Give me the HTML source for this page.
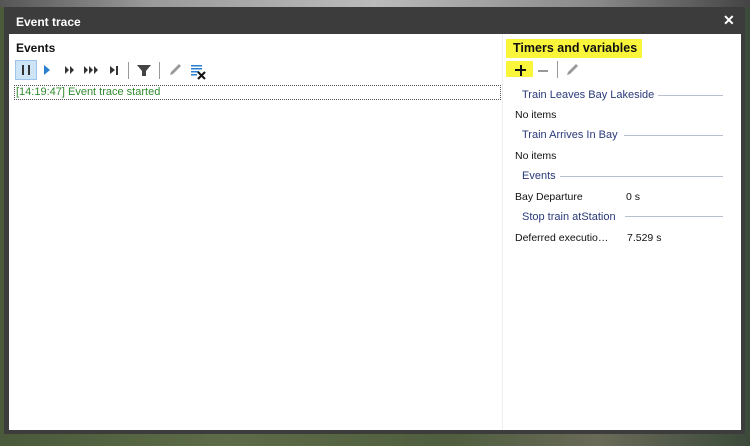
<!DOCTYPE html>
<html><head><meta charset="utf-8"><style>
*{margin:0;padding:0;box-sizing:border-box}
body{width:750px;height:446px;overflow:hidden;position:relative;font-family:"Liberation Sans",sans-serif;
background:linear-gradient(90deg,#4a5a3a 0%,#5d6b48 30%,#4f5e3e 60%,#6a6a58 80%,#3b4a3a 100%)}
.top{position:absolute;left:0;top:0;width:750px;height:7px;background:linear-gradient(90deg,#555 0%,#9a9a9a 20%,#bbb 50%,#888 80%,#444 100%)}
.frame{position:absolute;left:4px;top:7px;width:741px;height:427px;background:#3c3c3c}
.title{position:absolute;left:16px;top:15px;color:#fff;font-weight:bold;font-size:12px}
.close{position:absolute;left:723px;top:12px;color:#fff;font-size:14px;font-weight:bold}
.content{position:absolute;left:9px;top:34px;width:732px;height:396px;background:#fff}
.div{position:absolute;left:502px;top:34px;width:1px;height:396px;background:#eee}
.h{position:absolute;font-weight:bold;font-size:12px;color:#111}
.t{position:absolute;font-size:10.5px;color:#111;white-space:nowrap}
.sec{position:absolute;font-size:11px;color:#2a3a7a;white-space:nowrap}
.line{position:absolute;height:1px;background:#b8c0d0}
</style></head><body>
<div class="top"></div>
<div class="frame"></div>
<div class="title">Event trace</div>
<div class="close">✕</div>
<div class="content"></div>
<div class="div"></div>
<div class="h" style="left:16px;top:41px">Events</div>
<div style="position:absolute;left:15px;top:60px;width:22px;height:20px;background:#cde4f7;border:1px solid #9cc4ea"></div>
<div style="position:absolute;left:22px;top:65px;width:2px;height:10px;background:#333"></div>
<div style="position:absolute;left:28px;top:65px;width:2px;height:10px;background:#333"></div>
<svg style="position:absolute;left:40px;top:62px" width="180" height="18">
<polygon points="4,3 10,8 4,13" fill="#2a7fd0"/>
<polygon points="25,4 29,8 25,12" fill="#333"/><polygon points="30,4 34,8 30,12" fill="#333"/>
<polygon points="44,4 48,8 44,12" fill="#333"/><polygon points="49,4 53,8 49,12" fill="#333"/><polygon points="54,4 58,8 54,12" fill="#333"/>
<polygon points="70,4 75,8 70,12" fill="#333"/><rect x="76" y="4" width="2" height="9" fill="#333"/>
<rect x="88" y="0" width="1" height="17" fill="#999"/>
<polygon points="97,3 111,3 106,9 106,14 102,14 102,9" fill="#444"/>
<rect x="119" y="0" width="1" height="17" fill="#999"/>
<polygon points="130,13 131,10 139,2 141,4 133,12" fill="#999"/>
<rect x="151" y="3" width="11" height="1.5" fill="#2a7fd0"/><rect x="151" y="6" width="11" height="1.5" fill="#2a7fd0"/><rect x="151" y="9" width="8" height="1.5" fill="#2a7fd0"/><rect x="151" y="12" width="6" height="1.5" fill="#2a7fd0"/>
<path d="M158 10 L165 17 M165 10 L158 17" stroke="#111" stroke-width="2"/>
</svg>
<div style="position:absolute;left:14px;top:85px;width:487px;height:15px;border:1px dotted #555"></div>
<div class="t" style="left:16px;top:86px;color:#2e8b2e;font-size:11px">[14:19:47] Event trace started</div>
<div style="position:absolute;left:506px;top:39px;width:136px;height:19px;background:#f8f53a"></div>
<div class="h" style="left:513px;top:41px;font-size:12.5px">Timers and variables</div>
<div style="position:absolute;left:506px;top:61px;width:27px;height:16px;background:#f8f53a"></div>
<div style="position:absolute;left:515px;top:69px;width:11px;height:2px;background:#111"></div>
<div style="position:absolute;left:519.5px;top:64.5px;width:2px;height:11px;background:#111"></div>
<div style="position:absolute;left:538px;top:70px;width:10px;height:1.5px;background:#999"></div>
<div style="position:absolute;left:557px;top:61px;width:1px;height:17px;background:#999"></div>
<svg style="position:absolute;left:565px;top:62px" width="16" height="16"><polygon points="2,13 3,10 11,2 13,4 5,12" fill="#999"/></svg>
<div class="sec" style="left:522px;top:89px">Train Leaves Bay Lakeside</div><div class="line" style="left:658px;top:95px;width:65px"></div>
<div class="t" style="left:515px;top:109px">No items</div>
<div class="sec" style="left:522px;top:129px">Train Arrives In Bay</div><div class="line" style="left:624px;top:135px;width:99px"></div>
<div class="t" style="left:515px;top:150px">No items</div>
<div class="sec" style="left:522px;top:170px">Events</div><div class="line" style="left:560px;top:176px;width:163px"></div>
<div class="t" style="left:515px;top:191px">Bay Departure</div><div class="t" style="left:626px;top:191px">0 s</div>
<div class="sec" style="left:522px;top:211px">Stop train atStation</div><div class="line" style="left:625px;top:216px;width:98px"></div>
<div class="t" style="left:515px;top:232px">Deferred executio…</div><div class="t" style="left:627px;top:232px">7.529 s</div>
</body></html>
